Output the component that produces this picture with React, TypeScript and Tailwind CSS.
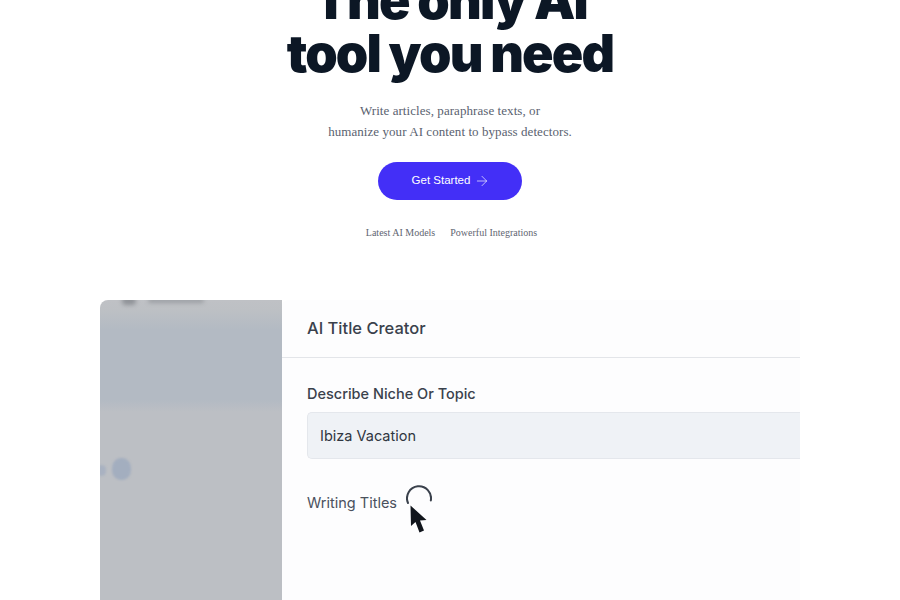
import { ArrowRight } from "lucide-react";

export default function App() {
  return (
    <main className="h-[600px] w-[900px] overflow-hidden bg-white">
      <section className="-mt-[26px] flex flex-col items-center">
        <h1 className="text-center font-['Inter',sans-serif] text-[52px] font-black leading-[53px] tracking-[-0.035em] text-[#0c1725]">
          The only AI
          <br />
          tool you need
        </h1>
        <div className="mt-[20px] text-center font-['Liberation_Serif',serif] text-[13px] leading-[21px] tracking-[0.005em] text-[#5a6270]">
          <p>Write articles, paraphrase texts, or</p>
          <p>humanize your AI content to bypass detectors.</p>
        </div>
        <button className="mt-[20px] flex h-[38px] w-[144px] items-center justify-center gap-[4px] rounded-full bg-[#432ff7] pl-[2px] font-['Liberation_Sans',sans-serif] text-[11.5px] text-white">
          Get Started
          <ArrowRight className="h-[16px] w-[16px]" strokeWidth={1} />
        </button>
        <div className="ml-[3px] mt-[26px] flex gap-[15px] font-['Liberation_Serif',serif] text-[10px] leading-[14px] text-[#5f6672]">
          <span>Latest AI Models</span>
          <span>Powerful Integrations</span>
        </div>
      </section>

      <section className="mx-[100px] mt-[60px] flex h-[320px] overflow-hidden rounded-tl-lg font-['Inter',sans-serif]">
        <aside className="relative w-[182px] shrink-0 bg-[linear-gradient(#bfc1c5_0,#bdc0c4_10px,#b3bac3_30px,#b3bac3_100px,#bcbfc4_112px,#bcbfc4_100%)]">
          <div className="absolute left-[22px] top-[-3px] h-[8px] w-[14px] rounded-full bg-[#8f9297] blur-[2px]" />
          <div className="absolute left-[48px] top-[-2px] h-[5px] w-[56px] rounded-full bg-[#9b9ea3] blur-[2px]" />
          <div className="absolute left-[12px] top-[158px] h-[22px] w-[19px] rounded-[45%] bg-[#a3aebf] blur-[1px]" />
          <div className="absolute left-[-3px] top-[165px] h-[11px] w-[9px] rounded-full bg-[#a9b2c1] blur-[1px]" />
          <div className="absolute bottom-[-2px] left-0 h-[12px] w-[10px] rounded-sm bg-[#aeb5c0] blur-[1px]" />
        </aside>

        <div className="-ml-px flex-1 rounded-tl-lg bg-[#fdfdfe]">
          <header className="flex h-[58px] items-center border-b border-[#e3e5e9] px-[26px] text-[16.5px] font-medium text-[#3a414c]">
            AI Title Creator
          </header>
          <div className="pl-[26px]">
            <label className="mt-[27px] block text-[14.5px] font-medium leading-[18px] text-[#3a414c]">
              Describe Niche Or Topic
            </label>
            <div className="mt-[9px] flex h-[47px] items-center rounded-l-[5px] border border-r-0 border-[#e4e7ec] bg-[#eff2f6] pl-[12px] text-[14.5px] text-[#2f3641]">
              Ibiza Vacation
            </div>
            <div className="mt-[26px] flex items-start gap-[9px]">
              <span className="pt-[9px] text-[14.5px] leading-[18px] text-[#4a515d]">Writing Titles</span>
              <span className="relative h-[26px] w-[26px]">
                <svg viewBox="0 0 26 26" className="h-[26px] w-[26px]" fill="none">
                  <path d="M2 18 A12 12 0 1 1 24.8 15.5" stroke="#3a414c" strokeWidth="2" strokeLinecap="round" />
                </svg>
                <svg viewBox="0 0 17 28" className="absolute left-[4px] top-[20px] h-[28px] w-[17px]">
                  <path d="M0.5 0.5 L1 21 L5.5 17 L9.5 27.5 L14 25.5 L10 15.5 L16.5 15 Z" fill="#11151c" />
                </svg>
              </span>
            </div>
          </div>
        </div>
      </section>
    </main>
  );
}
